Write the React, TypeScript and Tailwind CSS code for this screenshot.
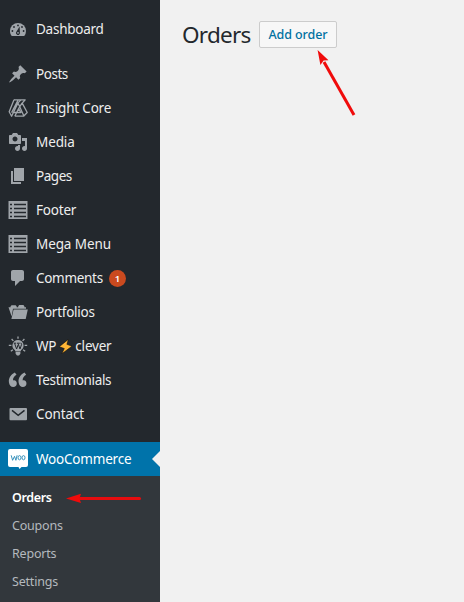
import type { ReactNode } from "react";

const Dash = ({ children }: { children: ReactNode }) => (
  <svg viewBox="0 0 20 20" className="h-5 w-5 shrink-0" fill="#a0a5aa">{children}</svg>
);

const ListIcon = () => (
  <Dash>
    <path d="M0.5 1h19v18h-19z" />
    <path d="M2 4.5h2M6 4.5H18M2 8.5h2M6 8.5H18M2 12.5h2M6 12.5H18M2 16.5h2M6 16.5H18" stroke="#23282d" strokeWidth="1.3" />
  </Dash>
);

const Bolt = () => (
  <svg viewBox="0 0 14 14" className="mx-[2px] h-[15px] w-[15px] shrink-0">
    <path d="M9.6.4 1.2 7.2l4.7 1.7L3.6 13.8 13 6.7 8.3 5z" fill="#ffb636" stroke="#0b0b0b" strokeWidth=".5" strokeLinejoin="round" />
  </svg>
);

const items: { icon: ReactNode; label: ReactNode; track: string; badge?: string }[] = [
  {
    label: "Posts", track: "tracking-[-0.45px]",
    icon: <Dash><path d="M10.44 3.02l1.82-1.82 6.36 6.35-1.83 1.82c-1.05-.68-2.48-.57-3.41.36l-.75.75c-.92.93-1.04 2.35-.35 3.41l-1.83 1.82-2.41-2.41-2.8 2.79c-.42.42-3.38 2.71-3.8 2.29s1.86-3.39 2.28-3.81l2.79-2.79L4.1 9.36l1.83-1.82c1.05.69 2.48.57 3.4-.36l.75-.75c.93-.92 1.05-2.35.36-3.41z" /></Dash>,
  },
  {
    label: "Insight Core", track: "tracking-[-0.2px]",
    icon: (
      <Dash>
        <path d="M6 1.8h11.2l-3 3.3 5 9.4-3.6 3.7H6.8M6 1.8 1.2 13.8l2.4 4.4L10 4.9M6.8 18.2l3.8-7.6 2.3 3.9H5.6M10.2 1.9 3.6 14.6M14 5.2l-3.4 5.4M13 1.9l-3 3 5.8 12.8" fill="none" stroke="#a0a5aa" strokeWidth="1.3" strokeLinejoin="round" />
      </Dash>
    ),
  },
  {
    label: "Media", track: "tracking-[-0.1px]",
    icon: <Dash><path d="M13 11V4c0-.55-.45-1-1-1h-1.67L9 1H5L3.67 3H2c-.55 0-1 .45-1 1v7c0 .55.45 1 1 1h10c.55 0 1-.45 1-1zM7 4.5c1.38 0 2.5 1.12 2.5 2.5S8.38 9.5 7 9.5 4.5 8.38 4.5 7 5.62 4.5 7 4.5zM14 6h5v10.5c0 1.38-1.12 2.5-2.5 2.5S14 17.88 14 16.5s1.12-2.5 2.5-2.5c.17 0 .34.02.5.05V9h-3V6zm-4 8.05V13h2v3.5c0 1.38-1.12 2.5-2.5 2.5S7 17.88 7 16.5 8.12 14 9.5 14c.17 0 .34.02.5.05z" /></Dash>,
  },
  { label: "Pages", track: "tracking-[-0.45px]", icon: <Dash><path d="M6 15V2h10v13H6zm-1 1h8v2H3V5h2v11z" /></Dash> },
  { label: "Footer", track: "tracking-[-0.2px]", icon: <ListIcon /> },
  { label: "Mega Menu", track: "tracking-[-0.1px]", icon: <ListIcon /> },
  {
    label: "Comments", track: "tracking-[-0.3px]", badge: "1",
    icon: <Dash><path d="M5 2h9c1.1 0 2 .9 2 2v7c0 1.1-.9 2-2 2h-2l-5 5v-5H5c-1.1 0-2-.9-2-2V4c0-1.1.9-2 2-2z" /></Dash>,
  },
  {
    label: "Portfolios", track: "tracking-[-0.25px]",
    icon: (
      <Dash>
        <path d="M0.5 5.2h2V4.4l1-1.1h4.2l1 1.1v.8h1.5v-1l1-1.1h4.2l1 1.1v1h1.6v1.6H5L3.6 14.5z" />
        <path d="M5.6 7.6H19.8L17.7 17H3.4z" />
      </Dash>
    ),
  },
  {
    label: <><span>WP</span><Bolt /><span>clever</span></>, track: "tracking-[-0.2px]",
    icon: (
      <Dash>
        <path d="M10 0.5v2.3M3.6 3l1.8 1.9M16.4 3l-1.8 1.9M0.8 9.3h2.6M16.6 9.3h2.6M2.8 15.2l2.1-1.5M17.2 15.2l-2.1-1.5" stroke="#a0a5aa" strokeWidth="1.3" />
        <path d="M10 4a5.5 5.5 0 0 0-3.2 10l.7 1.5h5l.7-1.5A5.5 5.5 0 0 0 10 4zM7.6 16h4.8v1.8L11 19.5H9l-1.4-1.7z" />
        <path d="M5.8 7.2h2.4M9 7.2h2.8M6.6 7.4l2 5.6 1.5-4.2M10 7.4l2 5.6 1.6-4.6-.8-1.6" fill="none" stroke="#23282d" strokeWidth="1" />
      </Dash>
    ),
  },
  {
    label: "Testimonials", track: "tracking-[-0.33px]",
    icon: <Dash><path transform="translate(-2.6 -2.3) scale(1.2)" d="M9.49 13.22c0-.74-.2-1.38-.61-1.9-.62-.78-1.83-.88-2.53-.72-.29-1.65 1.11-3.75 2.92-4.65L7.88 4c-2.73 1.3-5.42 4.28-4.96 8.05C3.21 14.43 4.59 16 6.54 16c.85 0 1.56-.25 2.12-.75s.83-1.18.83-2.03zm8.05 0c0-.74-.2-1.38-.61-1.9-.63-.78-1.83-.88-2.53-.72-.29-1.65 1.11-3.75 2.92-4.65L15.93 4c-2.73 1.3-5.41 4.28-4.95 8.05.29 2.38 1.66 3.95 3.61 3.95.85 0 1.56-.25 2.12-.75s.83-1.18.83-2.03z" /></Dash>,
  },
  {
    label: "Contact", track: "tracking-[-0.1px]",
    icon: (
      <Dash>
        <rect x="1.5" y="4" width="17.5" height="12.2" rx="1" />
        <path d="M4 6.3l6.2 5 6.3-5" fill="none" stroke="#23282d" strokeWidth="1.5" />
      </Dash>
    ),
  },
];

const DashboardIcon = () => (
  <Dash>
    <path d="M3.76 17h12.48A8 8 0 0 0 18 12a8 8 0 1 0-16 0c0 1.89.66 3.63 1.76 5z" />
    <g fill="#23282d">
      <circle cx="10" cy="6.4" r=".9" /><circle cx="6" cy="8" r=".9" /><circle cx="14" cy="8" r=".9" />
      <circle cx="4.4" cy="12" r=".9" /><circle cx="15.6" cy="12" r=".9" />
      <path d="M11.6 7.4 11.9 13.6a2 2 0 1 1-3.5-.9z" />
    </g>
    <circle cx="10" cy="13.8" r=".9" />
  </Dash>
);

function Row({ icon, label, track, badge }: { icon: ReactNode; label: ReactNode; track: string; badge?: string }) {
  return (
    <li className="flex h-[34px] items-center gap-2 pl-2 text-[#eee]">
      {icon}
      <span className={`flex items-center whitespace-nowrap ${track}`}>{label}</span>
      {badge && (
        <span className="-ml-[2px] flex h-[17px] w-[17px] items-center justify-center rounded-full bg-[#ca4a1f] text-[9.5px] font-semibold text-white">{badge}</span>
      )}
    </li>
  );
}

export default function App() {
  return (
    <div className="flex h-[602px] w-[464px] overflow-hidden bg-[#f1f1f1] font-['Noto_Sans','Open_Sans',sans-serif]">
      <nav className="flex w-40 shrink-0 flex-col bg-[#23282d] pt-3 text-[13.5px] leading-[19px]">
        <ul>
          <Row icon={<DashboardIcon />} label="Dashboard" track="tracking-[-0.25px]" />
        </ul>
        <ul className="mt-[11px]">
          {items.map((it, i) => <Row key={i} {...it} />)}
        </ul>
        <div className="relative mt-[11px] flex h-[34px] items-center gap-2 bg-[#0073aa] pl-2 text-white">
          <svg viewBox="0 0 20 20" className="h-5 w-5 shrink-0">
            <path d="M2 0h16a2 2 0 0 1 2 2v14a2 2 0 0 1-2 2h-4.5L11.5 20l-1-2H2a2 2 0 0 1-2-2V2a2 2 0 0 1 2-2z" fill="#fff" />
            <path d="M3.2 6.3l1.4 5 1.9-4 1.4 4 1.2-5" fill="none" stroke="#2587b5" strokeWidth=".9" />
            <ellipse cx="11.5" cy="8.7" rx="1.5" ry="2.1" fill="none" stroke="#2587b5" strokeWidth=".9" />
            <ellipse cx="15.5" cy="8.7" rx="1.5" ry="2.1" fill="none" stroke="#2587b5" strokeWidth=".9" />
          </svg>
          <span className="tracking-[-0.2px]">WooCommerce</span>
          <svg viewBox="0 0 8 16" className="absolute right-0 top-[9px] h-4 w-2"><path d="M8 0v16L0 8z" fill="#f1f1f1" /></svg>
        </div>
        <ul className="flex-1 bg-[#32373c] pt-[7px] text-[12.5px] tracking-[-0.2px] text-[#b4b9be]">
          <li className="flex h-7 items-center pl-3 font-semibold text-white">
            <span className="w-[54px] tracking-[-0.35px]">Orders</span>
            <svg viewBox="0 0 76 12" className="h-3 w-[76px]">
              <path d="M14 7.5h59.5" stroke="#e60c0f" strokeWidth="3" strokeLinecap="round" />
              <path d="M0 7.5 15 2.8l-1.5 4.7L15 12z" fill="#f00b0b" />
            </svg>
          </li>
          <li className="flex h-7 items-center pl-3">Coupons</li>
          <li className="flex h-7 items-center pl-3">Reports</li>
          <li className="flex h-7 items-center pl-3">Settings</li>
        </ul>
      </nav>
      <main className="flex-1 pl-[22px] pt-[21px]">
        <div className="flex items-start">
          <h1 className="w-[77px] text-[22.5px] leading-[28px] tracking-[-0.75px] text-[#23282d]">Orders</h1>
          <button className="h-[27px] w-[78px] whitespace-nowrap rounded-[2px] border border-[#ccc] bg-[#f7f7f7] pt-[2px] text-[12.5px] font-medium tracking-[-0.1px] text-[#0071a1]">Add order</button>
        </div>
        <svg viewBox="0 0 40 68" className="ml-[134px] h-[68px] w-10">
          <path d="M8 13l30 53" stroke="#f00b0b" strokeWidth="3" />
          <path d="M1.6 1 12.5 11.3 7.6 11.5 4.4 16z" fill="#f00b0b" />
        </svg>
      </main>
    </div>
  );
}
